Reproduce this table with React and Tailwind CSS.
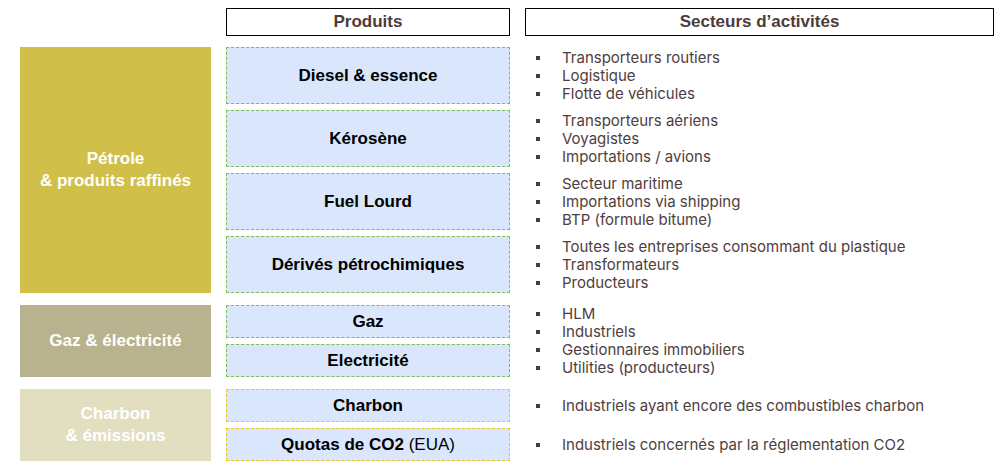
import React from "react";

const groups = [
  {
    label: ["Pétrole", "& produits raffinés"],
    bg: "bg-[#d0c049]",
    rowH: "grid-rows-[57px_57px_57px_57px]",
    span: "row-span-4",
    border: "border-[#7cc24a]",
    rows: [
      { product: "Diesel & essence", sectors: ["Transporteurs routiers", "Logistique", "Flotte de véhicules"] },
      { product: "Kérosène", sectors: ["Transporteurs aériens", "Voyagistes", "Importations / avions"] },
      { product: "Fuel Lourd", sectors: ["Secteur maritime", "Importations via shipping", "BTP (formule bitume)"] },
      {
        product: "Dérivés pétrochimiques",
        sectors: ["Toutes les entreprises consommant du plastique", "Transformateurs", "Producteurs"],
      },
    ],
  },
];

function Bullets({ items, className = "" }) {
  return (
    <div className={"flex flex-col justify-center " + className}>
      {items.map((t) => (
        <div key={t} className="flex items-center h-[18px]">
          <div className="w-[37px] flex pl-[11px]">
            <span className="w-[4px] h-[4px] bg-[#4a3a3a]" />
          </div>
          <span className="text-[15px] text-[#4e3e3e] font-['Inter',sans-serif] leading-[18px]">{t}</span>
        </div>
      ))}
    </div>
  );
}

function Product({ children, border }) {
  return (
    <div
      className={
        "bg-[#dae6fb] border border-dashed flex items-center justify-center text-[17px] font-bold text-black " +
        border
      }
    >
      {children}
    </div>
  );
}

function Category({ lines, bg, span, text = "text-white" }) {
  return (
    <div
      className={
        "flex flex-col items-center justify-center text-[17px] font-bold leading-[22px] " + bg + " " + span + " " + text
      }
    >
      {lines.map((l) => (
        <span key={l}>{l}</span>
      ))}
    </div>
  );
}

export default function App() {
  const g = groups[0];
  return (
    <div className="w-[1005px] h-[468px] bg-white font-['Liberation_Sans',Arial,sans-serif] pl-[20px] pt-[8px]">
      <div className="flex gap-[15px] ml-[206px]">
        <div className="w-[284px] h-[28px] border border-black flex items-center justify-center text-[17px] font-bold text-[#4d3b3b]">
          Produits
        </div>
        <div className="w-[469px] h-[28px] border border-black flex items-center justify-center text-[17px] font-bold text-[#4d3b3b]">
          Secteurs d’activités
        </div>
      </div>

      <div className="flex flex-col gap-[12px] mt-[11px]">
        {/* Pétrole */}
        <div className={"grid grid-cols-[191px_284px_469px] gap-x-[15px] gap-y-[6px] " + g.rowH}>
          <Category lines={g.label} bg={g.bg} span={g.span + " col-start-1 row-start-1"} />
          {g.rows.map((r, i) => (
            <React.Fragment key={r.product}>
              <div className="col-start-2 grid" style={{ gridRowStart: i + 1 }}>
                <Product border={g.border}>{r.product}</Product>
              </div>
              <Bullets items={r.sectors} className="col-start-3" />
            </React.Fragment>
          ))}
        </div>

        {/* Gaz & électricité */}
        <div className="grid grid-cols-[191px_284px_469px] grid-rows-[33px_33px] gap-x-[15px] gap-y-[6px]">
          <Category lines={["Gaz & électricité"]} bg="bg-[#b8b28e]" span="row-span-2" />
          <Product border="border-[#7cc24a]">Gaz</Product>
          <Bullets
            items={["HLM", "Industriels", "Gestionnaires immobiliers", "Utilities (producteurs)"]}
            className="row-span-2 col-start-3 row-start-1"
          />
          <div className="col-start-2 row-start-2 grid">
            <Product border="border-[#7cc24a]">Electricité</Product>
          </div>
        </div>

        {/* Charbon & émissions */}
        <div className="grid grid-cols-[191px_284px_469px] grid-rows-[33px_33px] gap-x-[15px] gap-y-[6px]">
          <Category lines={["Charbon", "& émissions"]} bg="bg-[#e2dec0]" span="row-span-2" />
          <Product border="border-[#f5c518]">Charbon</Product>
          <Bullets items={["Industriels ayant encore des combustibles charbon"]} />
          <div className="col-start-2 row-start-2 grid">
            <Product border="border-[#f5c518]">
              Quotas de CO2&nbsp;<span className="font-normal">(EUA)</span>
            </Product>
          </div>
          <Bullets items={["Industriels concernés par la réglementation CO2"]} className="col-start-3 row-start-2" />
        </div>
      </div>
    </div>
  );
}
